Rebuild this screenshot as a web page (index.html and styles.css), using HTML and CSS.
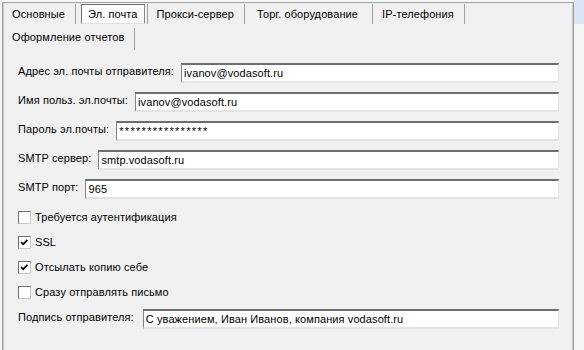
FILE: index.html
```html
<!DOCTYPE html>
<html lang="ru">
<head>
    <meta charset="UTF-8">
    <title>Эл. почта</title>
    <link rel="stylesheet" href="styles.css">
</head>
<body>
    <div class="panel">
        <div class="tab-row">
            <div class="tab">Основные</div>
            <div class="tab active"><span>Эл. почта</span></div>
            <div class="tab">Прокси-сервер</div>
            <div class="tab wide">Торг. оборудование</div>
            <div class="tab">IP-телефония</div>
        </div>
        <div class="tab-row second">
            <div class="tab">Оформление отчетов</div>
        </div>

        <form class="settings">
            <div class="field">
                <label for="sender">Адрес эл. почты отправителя:</label>
                <input type="text" id="sender" value="ivanov@vodasoft.ru">
            </div>
            <div class="field">
                <label for="user">Имя польз. эл.почты:</label>
                <input type="text" id="user" value="ivanov@vodasoft.ru">
            </div>
            <div class="field">
                <label for="pass">Пароль эл.почты:</label>
                <input type="text" id="pass" class="stars" value="****************">
            </div>
            <div class="field">
                <label for="smtp">SMTP сервер:</label>
                <input type="text" id="smtp" value="smtp.vodasoft.ru">
            </div>
            <div class="field">
                <label for="port">SMTP порт:</label>
                <input type="text" id="port" value="965">
            </div>

            <div class="checks">
                <div class="check"><span class="box"></span>Требуется аутентификация</div>
                <div class="check"><span class="box"><svg width="11" height="11" viewBox="0 0 11 11"><path d="M2 5 L4.2 7.2 L8.5 2.8" fill="none" stroke="#000" stroke-width="1.7"/></svg></span>SSL</div>
                <div class="check"><span class="box"><svg width="11" height="11" viewBox="0 0 11 11"><path d="M2 5 L4.2 7.2 L8.5 2.8" fill="none" stroke="#000" stroke-width="1.7"/></svg></span>Отсылать копию себе</div>
                <div class="check"><span class="box"></span>Сразу отправлять письмо</div>
            </div>

            <div class="field sign">
                <label for="sign">Подпись отправителя:</label>
                <input type="text" id="sign" value="С уважением, Иван Иванов, компания vodasoft.ru">
            </div>
        </form>
    </div>
</body>
</html>
```

FILE: styles.css
```css
html, body {
    height: 100%;
}
body {
    margin: 0;
    overflow: hidden;
    font-family: "Liberation Sans", Arial, sans-serif;
    font-size: 11px;
    letter-spacing: 0.1px;
    color: #000;
    background: linear-gradient(#dae6f3, #dae6f3) right top / 10px 24px no-repeat, #f6f6f6;
}
.panel {
    box-sizing: border-box;
    width: 572px;
    height: calc(100% - 2px);
    margin: 2px 0 0 2px;
    background-color: #f0f0f0;
    border: 1px solid #a0a0a0;
    border-bottom: none;
    box-shadow: inset 1px 0 #c8c8c8, inset -1px 0 #c8c8c8;
}
.tab-row {
    display: flex;
    height: 20px;
    margin-top: 1px;
}
.tab-row.second {
    height: 22px;
    margin-top: 4px;
}
.tab {
    padding: 0 10px 0 9px;
    line-height: 20px;
    border-right: 1px solid #a0a0a0;
    white-space: nowrap;
}
.tab.wide {
    padding: 0 14px 0 12px;
}
.second .tab {
    line-height: 18px;
}
.tab.active {
    padding: 0 2px 0 5px;
}
.tab.active span {
    display: block;
    box-sizing: border-box;
    height: 20px;
    padding: 0 6px;
    line-height: 18px;
    background-color: #fbfbfb;
    border: 1px solid;
    border-color: #6e6e6e #8a8a8a #e0e0e0 #6e6e6e;
}
.settings {
    margin: 0;
    padding: 13px 14px 0 15px;
}
.field {
    display: flex;
    align-items: flex-start;
    gap: 7px;
    margin-bottom: 9px;
}
.field.sign {
    gap: 9px;
}
.field label {
    padding-top: 2px;
    line-height: 13px;
    white-space: nowrap;
}
.field input {
    flex: 1;
    min-width: 0;
    box-sizing: border-box;
    height: 20px;
    margin: 0;
    padding: 0 2px;
    font-family: inherit;
    font-size: 11px;
    letter-spacing: 0.1px;
    color: #000;
    background-color: #fff;
    border-style: solid;
    border-width: 2px 1px 2px 1px;
    border-color: #6d6d6d #e3e3e3 #e3e3e3 #828282;
    outline: none;
}
.field input.stars {
    letter-spacing: 1.3px;
}
.checks {
    display: flex;
    flex-direction: column;
    gap: 12px;
    margin: 12px 0 10px;
}
.check {
    display: flex;
    align-items: center;
    gap: 4px;
    height: 13px;
    line-height: 13px;
}
.box {
    box-sizing: border-box;
    width: 13px;
    height: 13px;
    display: flex;
    align-items: center;
    justify-content: center;
    background-color: #fff;
    border: 1px solid;
    border-color: #707070 #c8c8c8 #c8c8c8 #707070;
}
```
